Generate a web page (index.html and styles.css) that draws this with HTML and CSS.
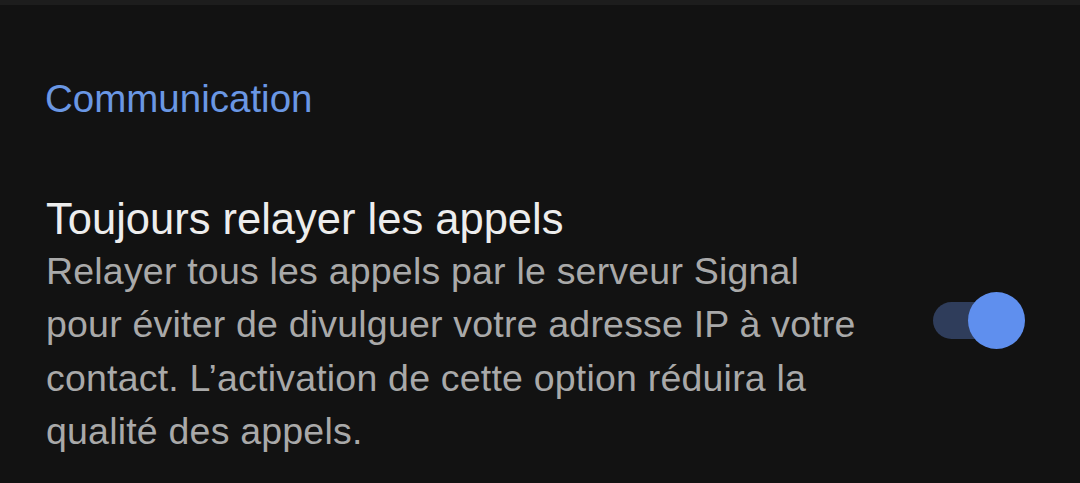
FILE: index.html
```html
<!DOCTYPE html>
<html lang="fr">
<head>
    <meta charset="UTF-8">
    <meta name="viewport" content="width=device-width, initial-scale=1.0">
    <title>Paramètres - Appels</title>
    <link rel="stylesheet" href="styles.css">
</head>
<body>

    <!-- Toolbar edge -->
    <div class="top-bar"></div>

    <!-- Section -->
    <div class="section">
        <h2 class="section-title">Communication</h2>

        <div class="pref-row">
            <div class="pref-text">
                <div class="pref-title">Toujours relayer les appels</div>
                <div class="pref-summary">Relayer tous les appels par le serveur Signal pour éviter de divulguer votre adresse IP à votre contact. L’activation de cette option réduira la qualité des appels.</div>
            </div>
            <div class="switch on">
                <div class="track"></div>
                <div class="thumb"></div>
            </div>
        </div>
    </div>

</body>
</html>
```

FILE: styles.css
```css
* {
    margin: 0;
    padding: 0;
    box-sizing: border-box;
    font-family: "Liberation Sans", Arial, sans-serif;
}

body {
    background: #121212;
    width: 1080px;
    height: 483px;
    overflow: hidden;
}

.top-bar {
    height: 5px;
    background: #1d1d1d;
}

.section {
    padding-top: 71px;
}

.section-title {
    font-size: 38.5px;
    font-weight: normal;
    line-height: 46px;
    color: #6a97e4;
    padding-left: 45px;
    margin-bottom: 71px;
}

.pref-row {
    display: flex;
    align-items: center;
    padding: 0 55px 0 46px;
    gap: 68px;
}

.pref-text {
    flex: 1;
}

.pref-title {
    font-size: 43.5px;
    line-height: 52px;
    color: #ededed;
}

.pref-summary {
    font-size: 37.5px;
    line-height: 53.3px;
    letter-spacing: 0.2px;
    color: #a9a9a9;
}

.switch {
    position: relative;
    width: 92px;
    height: 57px;
    margin-bottom: 10px;
}

.switch .track {
    position: absolute;
    left: 0;
    top: 10px;
    width: 80px;
    height: 37px;
    border-radius: 19px;
    background: #2f3d5b;
}

.switch .thumb {
    position: absolute;
    right: 0;
    top: 0;
    width: 57px;
    height: 57px;
    border-radius: 50%;
    background: #5f8fee;
}
```
